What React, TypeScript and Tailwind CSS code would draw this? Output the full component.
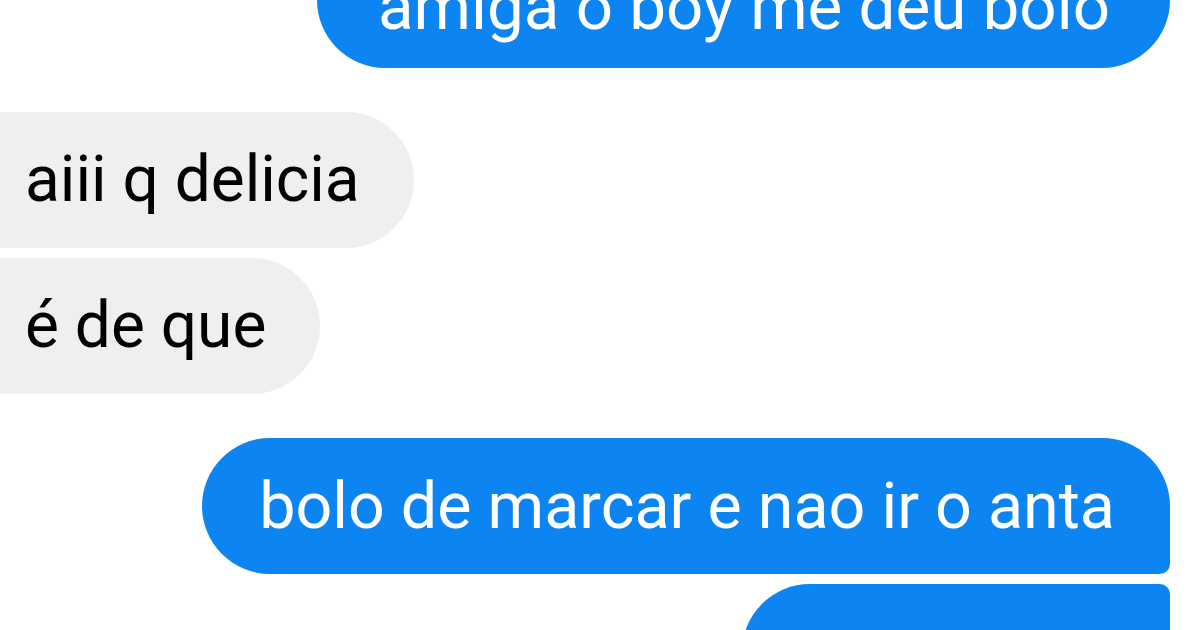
const font = { fontFamily: "Roboto, 'Noto Sans', sans-serif" };

function Sent({ text, className }: { text: string; className: string }) {
  return (
    <div className="flex justify-end pr-[30px]">
      <div
        style={font}
        className={`flex h-[136px] shrink-0 items-center whitespace-nowrap bg-[#0c85f3] leading-none text-white ${className}`}
      >
        {text}
      </div>
    </div>
  );
}

function Received({ text, className }: { text: string; className: string }) {
  return (
    <div className="flex justify-start">
      <div
        style={font}
        className={`-ml-[40px] flex h-[136px] items-center whitespace-nowrap bg-[#efeef0] pl-[65px] pr-[54px] text-[64px] leading-none text-black ${className}`}
      >
        {text}
      </div>
    </div>
  );
}

export default function App() {
  return (
    <div className="h-[630px] w-[1200px] overflow-hidden bg-white">
      <div className="-mt-[68px] flex flex-col">
        <Sent
          text="amiga o boy me deu bolo"
          className="rounded-[68px] pl-[61px] pr-[60px] pt-[14px] text-[65.5px]"
        />
        <div className="mt-[44px] flex flex-col gap-[10px]">
          <Received text="aiii q delicia" className="rounded-r-[68px]" />
          <Received text="é de que" className="rounded-r-[68px]" />
        </div>
        <div className="mt-[44px] flex flex-col gap-[10px]">
          <Sent
            text="bolo de marcar e nao ir o anta"
            className="rounded-l-[68px] rounded-tr-[68px] rounded-br-[10px] pl-[57px] pr-[55px] text-[64.6px]"
          />
          <Sent
            text="kkkkkkkkkk"
            className="rounded-l-[68px] rounded-tr-[10px] rounded-br-[68px] px-[52px] pt-[64px] text-[64px]"
          />
        </div>
      </div>
    </div>
  );
}
